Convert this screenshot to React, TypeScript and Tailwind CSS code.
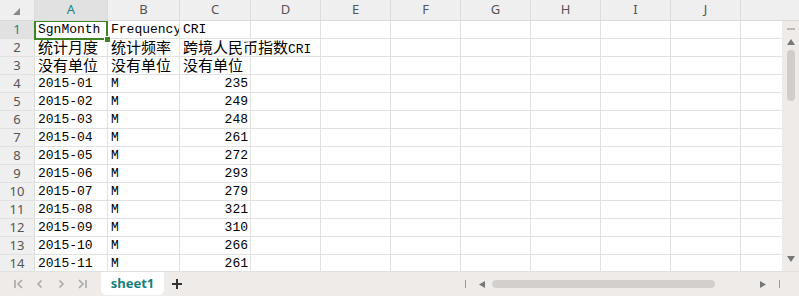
import type { ReactNode } from "react";

const COLS = [
  { key: "A", w: "w-[73px]" },
  { key: "B", w: "w-[72px]" },
  { key: "C", w: "w-[71px]" },
  { key: "D", w: "w-[70px]" },
  { key: "E", w: "w-[70px]" },
  { key: "F", w: "w-[70px]" },
  { key: "G", w: "w-[70px]" },
  { key: "H", w: "w-[70px]" },
  { key: "I", w: "w-[70px]" },
  { key: "J", w: "w-[70px]" },
];

const data: string[][] = [
  ["SgnMonth", "Frequency", "CRI"],
  ["统计月度", "统计频率", "跨境人民币指数CRI"],
  ["没有单位", "没有单位", "没有单位"],
  ["2015-01", "M", "235"],
  ["2015-02", "M", "249"],
  ["2015-03", "M", "248"],
  ["2015-04", "M", "261"],
  ["2015-05", "M", "272"],
  ["2015-06", "M", "293"],
  ["2015-07", "M", "279"],
  ["2015-08", "M", "321"],
  ["2015-09", "M", "310"],
  ["2015-10", "M", "266"],
  ["2015-11", "M", "261"],
];

const mono = "font-['Liberation_Mono','Noto_Sans_CJK_SC',monospace]";
const sans = "font-['Noto_Sans','Liberation_Sans',sans-serif]";

// split so CJK runs get the larger size, latin keeps mono width
function CellText({ text }: { text: string }) {
  const parts = text.match(/[\u4e00-\u9fff]+|[^\u4e00-\u9fff]+/g) ?? [];
  return (
    <span className="leading-none">
      {parts.map((p, i) =>
        /[\u4e00-\u9fff]/.test(p) ? (
          <span key={i} className="font-['Noto_Sans_CJK_SC',sans-serif] text-[15px] leading-none">
            {p}
          </span>
        ) : (
          <span key={i} className="leading-none">{p}</span>
        )
      )}
    </span>
  );
}

function Cell({
  w,
  children,
  right,
  overflow,
  noBorder,
}: {
  w: string;
  children?: ReactNode;
  right?: boolean;
  overflow?: boolean;
  noBorder?: boolean;
}) {
  return (
    <div
      className={`${w} relative flex h-full shrink-0 items-center whitespace-nowrap ${
        noBorder ? "" : "border-r border-[#e1e1e1]"
      } ${overflow ? "z-10 overflow-visible" : "overflow-hidden"} ${
        right ? "justify-end pr-[2px]" : "pl-[3px]"
      }`}
    >
      {children}
    </div>
  );
}

function NavIcon({ kind }: { kind: "first" | "prev" | "next" | "last" }) {
  return (
    <svg width="12" height="12" viewBox="0 0 12 12" fill="none" stroke="#a9a9a9" strokeWidth="1.6">
      {kind === "first" && (
        <>
          <path d="M2 2v8" />
          <path d="M9 2L5 6l4 4" />
        </>
      )}
      {kind === "prev" && <path d="M7.5 2.5L4 6l3.5 3.5" />}
      {kind === "next" && <path d="M4.5 2.5L8 6l-3.5 3.5" />}
      {kind === "last" && (
        <>
          <path d="M3 2l4 4-4 4" />
          <path d="M10 2v8" />
        </>
      )}
    </svg>
  );
}

export default function App() {
  return (
    <div className="flex h-[296px] w-[799px] flex-col overflow-hidden bg-white text-[13px] text-black">
      {/* column header */}
      <div className={`flex h-[21px] shrink-0 border-b border-[#d9d9d9] bg-[#efefef] ${sans} text-[13px] text-[#555]`}>
        <div className="flex w-[35px] shrink-0 items-center justify-center border-r border-[#dcdcdc]">
          <svg width="7" height="7" viewBox="0 0 7 7" className="ml-[-2px] mt-[3px]">
            <path d="M7 0V7H0Z" fill="#8a8a8a" />
          </svg>
        </div>
        {COLS.map((c) => (
          <div
            key={c.key}
            className={`${c.w} flex shrink-0 items-center justify-center border-r border-[#dcdcdc] ${
              c.key === "A" ? "bg-[#e1e1e1] text-[#1d8585]" : ""
            }`}
          >
            {c.key}
          </div>
        ))}
        <div className="flex-1" />
      </div>

      <div className="flex min-h-0 flex-1">
        {/* grid body */}
        <div className="min-w-0 flex-1 overflow-hidden">
          {data.map((row, r) => (
            <div
              key={r}
              className={`relative flex h-[18px] shrink-0 border-b border-[#e1e1e1] ${mono} text-[13px] ${
                r === 0 ? "z-20" : ""
              }`}
            >
              <div
                className={`flex w-[35px] shrink-0 items-center justify-center border-r border-[#dcdcdc] ${sans} text-[13px] ${
                  r === 0 ? "bg-[#e1e1e1] text-[#1d8585]" : "bg-[#efefef] text-[#555]"
                }`}
              >
                {r + 1}
              </div>
              <Cell w={COLS[0].w} overflow={r === 0}>
                <CellText text={row[0]} />
                {r === 0 && (
                  <>
                    <div className="pointer-events-none absolute left-[-1px] top-[-1px] h-[20px] w-[74px] border-2 border-[#3d8424]" />
                    <div className="absolute bottom-[-4px] right-[-3px] h-[5px] w-[5px] bg-[#3d8424] ring-1 ring-white" />
                  </>
                )}
              </Cell>
              <Cell w={COLS[1].w}>
                <CellText text={row[1]} />
              </Cell>
              <Cell w={COLS[2].w} right={r > 2} overflow={r === 1} noBorder={r === 1}>
                <CellText text={row[2]} />
              </Cell>
              {COLS.slice(3).map((c) => (
                <Cell key={c.key} w={c.w} />
              ))}
              <div className="flex-1" />
            </div>
          ))}
        </div>

        {/* vertical scrollbar */}
        <div className="flex w-[17px] shrink-0 flex-col items-center bg-[#efebe9]">
          <div className="mt-[7px] h-[2px] w-[8px] bg-[#bdbab8]" />
          <svg width="8" height="6" viewBox="0 0 8 6" className="mt-[9px]">
            <path d="M4 0L8 6H0Z" fill="#777" />
          </svg>
          <div className="mt-[5px] h-[51px] w-[8px] rounded-full bg-[#d1cdcb]" />
          <div className="flex-1" />
          <svg width="8" height="6" viewBox="0 0 8 6" className="mb-[9px]">
            <path d="M0 0H8L4 6Z" fill="#777" />
          </svg>
        </div>
      </div>

      {/* sheet bar */}
      <div className="flex h-[25px] shrink-0 items-stretch border-t border-[#e1e1e1] bg-[#efebe9]">
        <div className="flex items-center gap-[9px] pl-[13px]">
          <NavIcon kind="first" />
          <NavIcon kind="prev" />
          <NavIcon kind="next" />
          <NavIcon kind="last" />
        </div>
        <div
          className={`ml-[13px] mb-[1px] flex w-[63px] items-center justify-center rounded-b-[5px] bg-white ${sans} text-[13px] font-bold text-[#17807e]`}
        >
          sheet1
        </div>
        <div className="ml-[7px] flex items-center">
          <svg width="12" height="12" viewBox="0 0 12 12" stroke="#333" strokeWidth="2">
            <path d="M6 1v10M1 6h10" />
          </svg>
        </div>
        <div className="flex-1" />
        <div className="flex items-center gap-[7px] pr-[19px]">
          <div className="h-[8px] w-[1px] bg-[#9a9a9a]" />
          <svg width="6" height="7" viewBox="0 0 6 7" className="ml-[6px]">
            <path d="M0 3.5L6 0V7Z" fill="#777" />
          </svg>
          <div className="ml-[0px] h-[8px] w-[223px] rounded-full bg-[#d3cfcd]" />
          <svg width="6" height="7" viewBox="0 0 6 7" className="ml-[38px]">
            <path d="M6 3.5L0 0V7Z" fill="#777" />
          </svg>
          <div className="ml-[6px] h-[8px] w-[1px] bg-[#9a9a9a]" />
        </div>
      </div>
    </div>
  );
}
